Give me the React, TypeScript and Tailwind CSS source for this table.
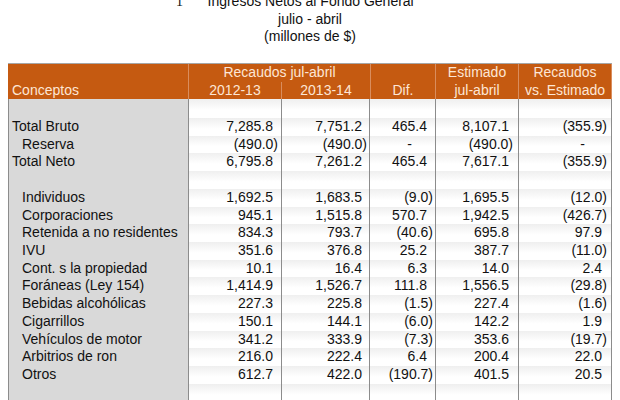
import React from "react";

type Row = { label: string; indent?: boolean; vals?: string[] };

const rows: Row[] = [
  { label: "" },
  { label: "Total Bruto", vals: ["7,285.8", "7,751.2", "465.4", "8,107.1", "(355.9)"] },
  { label: "Reserva", indent: true, vals: ["(490.0)", "(490.0)", "-", "(490.0)", "-"] },
  { label: "Total Neto", vals: ["6,795.8", "7,261.2", "465.4", "7,617.1", "(355.9)"] },
  { label: "" },
  { label: "Individuos", indent: true, vals: ["1,692.5", "1,683.5", "(9.0)", "1,695.5", "(12.0)"] },
  { label: "Corporaciones", indent: true, vals: ["945.1", "1,515.8", "570.7", "1,942.5", "(426.7)"] },
  { label: "Retenida a no residentes", indent: true, vals: ["834.3", "793.7", "(40.6)", "695.8", "97.9"] },
  { label: "IVU", indent: true, vals: ["351.6", "376.8", "25.2", "387.7", "(11.0)"] },
  { label: "Cont. s la propiedad", indent: true, vals: ["10.1", "16.4", "6.3", "14.0", "2.4"] },
  { label: "Foráneas (Ley 154)", indent: true, vals: ["1,414.9", "1,526.7", "111.8", "1,556.5", "(29.8)"] },
  { label: "Bebidas alcohólicas", indent: true, vals: ["227.3", "225.8", "(1.5)", "227.4", "(1.6)"] },
  { label: "Cigarrillos", indent: true, vals: ["150.1", "144.1", "(6.0)", "142.2", "1.9"] },
  { label: "Vehículos de motor", indent: true, vals: ["341.2", "333.9", "(7.3)", "353.6", "(19.7)"] },
  { label: "Arbitrios de ron", indent: true, vals: ["216.0", "222.4", "6.4", "200.4", "22.0"] },
  { label: "Otros", indent: true, vals: ["612.7", "422.0", "(190.7)", "401.5", "20.5"] },
  { label: "" },
];

const pads = [
  { paren: "pr-[3px]", pos: "pr-[8px]", dash: "pr-[24px]" },
  { paren: "pr-[2px]", pos: "pr-[7px]", dash: "pr-[23px]" },
  { paren: "pr-[2px]", pos: "pr-[8px]", dash: "pr-[23px]" },
  { paren: "pr-[5px]", pos: "pr-[9px]", dash: "pr-[26px]" },
  { paren: "pr-[4px]", pos: "pr-[9px]", dash: "pr-[26px]" },
];

function padFor(col: number, v: string) {
  const p = pads[col];
  if (v.startsWith("(")) return p.paren;
  if (v === "-") return p.dash;
  return p.pos;
}

export default function App() {
  return (
    <div
      className="w-[620px] h-[400px] overflow-hidden bg-white text-[14px] leading-[17.5px] text-[#111]"
      style={{ fontFamily: "'Liberation Sans', Arial, sans-serif" }}
    >
      {/* Title */}
      <div className="mt-[-7px]">
        <div className="flex pl-[176px]">
          <span
            className="w-[31.5px]"
            style={{ fontFamily: "'Liberation Serif', 'Times New Roman', serif" }}
          >
            1
          </span>
          <span>Ingresos Netos al Fondo General</span>
        </div>
        <div className="text-center">julio - abril</div>
        <div className="text-center">(millones de $)</div>
      </div>

      {/* Table */}
      <div className="mt-[17.5px] ml-[8px] w-[604px]">
        {/* Header */}
        <div className="grid grid-cols-[181px_93px_88px_66px_83px_93px] grid-rows-[17.5px_17.5px] h-[36px] border-t border-[#a6a6a6] bg-[#c55a11] text-[#fde6d5]">
          <div className="row-span-2 flex items-end pl-[4px] border-r border-[#d98d5e]">
            Conceptos
          </div>
          <div className="col-span-2 text-center">Recaudos jul-abril</div>
          <div className="row-span-2 flex items-end justify-center border-l border-r border-[#d98d5e]">
            Dif.
          </div>
          <div className="row-span-2 flex flex-col items-center border-r border-[#d98d5e]">
            <span>Estimado</span>
            <span>jul-abril</span>
          </div>
          <div className="row-span-2 flex flex-col items-center border-r border-[#d98d5e]">
            <span>Recaudos</span>
            <span>vs. Estimado</span>
          </div>
          <div className="col-start-2 row-start-2 text-center border-r border-[#d98d5e]">2012-13</div>
          <div className="col-start-3 row-start-2 text-center">2013-14</div>
        </div>

        {/* Body */}
        <div className="grid grid-cols-[181px_93px_88px_66px_83px_93px]">
          {rows.map((r, i) => {
            const h = i === 0 ? "h-[19px]" : "h-[17.72px]";
            return (
              <React.Fragment key={i}>
                <div
                  className={`${h} bg-[#d9d9d9] border-l border-r border-[#8c8c8c] whitespace-nowrap leading-[17.72px] ${
                    r.indent ? "pl-[13px]" : "pl-[3px]"
                  }`}
                >
                  {r.label}
                </div>
                {[0, 1, 2, 3, 4].map((c) => {
                  const v = r.vals ? r.vals[c] : "";
                  return (
                    <div
                      key={c}
                      className={`${h} bg-linear-to-b from-[#efefef] to-white to-60% border-r border-[#8c8c8c] text-right leading-[17.72px] whitespace-nowrap ${
                        v ? padFor(c, v) : ""
                      }`}
                    >
                      {v}
                    </div>
                  );
                })}
              </React.Fragment>
            );
          })}
        </div>
      </div>
    </div>
  );
}
